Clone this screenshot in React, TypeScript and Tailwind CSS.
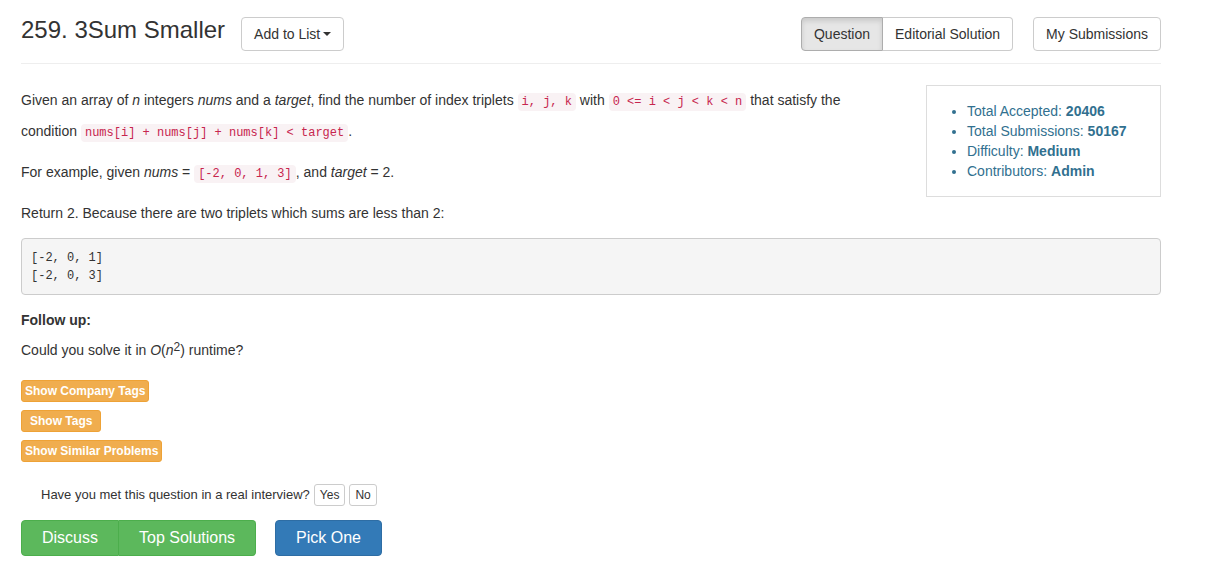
import type { ReactNode } from "react";

const stats = [
  { label: "Total Accepted", value: "20406" },
  { label: "Total Submissions", value: "50167" },
  { label: "Difficulty", value: "Medium" },
  { label: "Contributors", value: "Admin" },
];

function Code({ children }: { children: ReactNode }) {
  return (
    <code className="rounded-[4px] bg-[#f9f2f4] px-1 py-[2px] font-['Liberation_Mono',monospace] text-[12px] leading-[20px] text-[#c7254e]">
      {children}
    </code>
  );
}

const outline = "h-[34px] border border-[#ccc] bg-white px-3 text-[14px] leading-[20px] text-[#333]";
const tag = "h-[22px] rounded-[3px] border border-[#eea236] bg-[#f0ad4e] text-[12px] font-bold leading-[18px] text-white";
const small = "h-[22px] rounded-[3px] border border-[#ccc] bg-white px-[5px] text-[12px] leading-[18px] text-[#333]";
const large = "h-9 border px-5 text-[16px] leading-[24px] text-white";

export default function App() {
  return (
    <main className="bg-white pt-[17px] pr-[47px] pb-[10px] pl-[21px] font-['Liberation_Sans',Arial,sans-serif] text-[14px] leading-[30px] text-[#333]">
      <header className="flex items-start justify-between border-b border-[#eee] pb-3">
        <div className="flex items-start gap-4">
          <h1 className="text-[24px] leading-[26px]">259. 3Sum Smaller</h1>
          <button type="button" className={`${outline} flex items-center rounded-[4px]`}>
            Add to List
            <svg className="ml-[3px] h-1 w-2" viewBox="0 0 8 4" fill="currentColor" aria-hidden="true">
              <path d="M0 0h8L4 4z" />
            </svg>
          </button>
        </div>
        <nav className="flex">
          <button
            type="button"
            className="h-[34px] rounded-l-[4px] border border-[#adadad] bg-[#e6e6e6] px-3 text-[14px] leading-[20px] text-[#333] shadow-[inset_0_3px_5px_rgba(0,0,0,0.125)]"
          >
            Question
          </button>
          <button type="button" className={`${outline} rounded-r-[4px] border-l-0`}>
            Editorial Solution
          </button>
          <button type="button" className={`${outline} ml-5 rounded-[4px]`}>
            My Submissions
          </button>
        </nav>
      </header>

      <div className="mt-[21px] flex items-start justify-between gap-[50px]">
        <div className="flex flex-1 flex-col gap-[10px]">
          <p className="leading-[31px]">
            Given an array of <i>n</i> integers <i>nums</i> and a <i>target</i>, find the number of index triplets{" "}
            <Code>i, j, k</Code> with <Code>0 &lt;= i &lt; j &lt; k &lt; n</Code> that satisfy the condition{" "}
            <Code>nums[i] + nums[j] + nums[k] &lt; target</Code>.
          </p>
          <p className="leading-[31px]">
            For example, given <i>nums</i> = <Code>[-2, 0, 1, 3]</Code>, and <i>target</i> = 2.
          </p>
          <p>Return 2. Because there are two triplets which sums are less than 2:</p>
        </div>
        <aside className="w-[235px] shrink-0 border border-[#ddd] py-[15px] pr-3 pl-10 text-[#31708f]">
          <ul className="list-disc leading-[20px]">
            {stats.map((s) => (
              <li key={s.label} className="marker:text-[13px]">
                {s.label}: <strong>{s.value}</strong>
              </li>
            ))}
          </ul>
        </aside>
      </div>

      <pre className="mt-[10px] rounded-[4px] border border-[#ccc] bg-[#f5f5f5] px-[9px] pt-[10px] pb-[9px] font-['Liberation_Mono',monospace] text-[12px] leading-[18px]">
        {"[-2, 0, 1]\n[-2, 0, 3]"}
      </pre>

      <section className="mt-[10px]">
        <h2 className="font-bold">Follow up:</h2>
        <p>
          Could you solve it in <i>O</i>(<i>n</i>
          <sup className="-top-1 text-[12px]">2</sup>) runtime?
        </p>
      </section>

      <div className="mt-[15px] flex flex-col items-start gap-2">
        <button type="button" className={`${tag} px-[3px]`}>Show Company Tags</button>
        <button type="button" className={`${tag} px-2`}>Show Tags</button>
        <button type="button" className={`${tag} px-[3px]`}>Show Similar Problems</button>
      </div>

      <div className="mt-[22px] flex items-center gap-1 pl-5">
        <span className="text-[13px] leading-[20px]">Have you met this question in a real interview?</span>
        <button type="button" className={small}>Yes</button>
        <button type="button" className={small}>No</button>
      </div>

      <div className="mt-[14px] flex">
        <button type="button" className={`${large} rounded-l-[4px] border-[#4cae4c] bg-[#5cb85c]`}>Discuss</button>
        <button type="button" className={`${large} rounded-r-[4px] border-l-0 border-[#4cae4c] bg-[#5cb85c]`}>
          Top Solutions
        </button>
        <button type="button" className={`${large} ml-[19px] rounded-[4px] border-[#2e6da4] bg-[#337ab7]`}>Pick One</button>
      </div>
    </main>
  );
}
